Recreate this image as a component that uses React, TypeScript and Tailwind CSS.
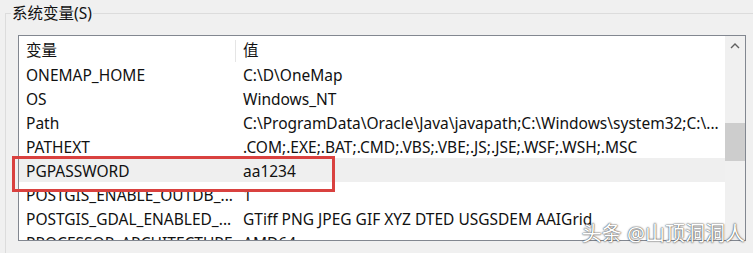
import React from 'react';

const rows: [string, string][] = [
  ['ONEMAP_HOME', 'C:\\D\\OneMap'],
  ['OS', 'Windows_NT'],
  ['Path', 'C:\\ProgramData\\Oracle\\Java\\javapath;C:\\Windows\\system32;C:\\...'],
  ['PATHEXT', '.COM;.EXE;.BAT;.CMD;.VBS;.VBE;.JS;.JSE;.WSF;.WSH;.MSC'],
  ['PGPASSWORD', 'aa1234'],
  ['POSTGIS_ENABLE_OUTDB_...', '1'],
  ['POSTGIS_GDAL_ENABLED_...', 'GTiff PNG JPEG GIF XYZ DTED USGSDEM AAIGrid'],
  ['PROCESSOR_ARCHITECTURE', 'AMD64'],
];

export default function App() {
  return (
    <div
      className="relative w-[753px] h-[253px] overflow-hidden bg-[#f0f0f0] text-[15.5px] text-[#111]"
      style={{ fontFamily: '"Noto Sans", "Noto Sans CJK SC", sans-serif' }}
    >
      {/* Group box */}
      <div className="relative mt-[13px] ml-[5px] h-[245px] border-l border-t border-[#dcdcdc]">
        <span className="absolute -top-[12px] left-[5px] bg-[#f0f0f0] px-[1px] leading-[22px]">
          系统变量(S)
        </span>

        {/* List view */}
        <div className="ml-[12px] mt-[21px] flex w-[728px] h-[206px] border border-[#828790] bg-white">
          <div className="flex-1 overflow-hidden">
            {/* Header */}
            <div className="flex h-[26px] items-center pt-[4px]">
              <div className="w-[217px] h-full pl-[7px] flex items-center border-r border-[#e5e5e5]">变量</div>
              <div className="pl-[7px]">值</div>
            </div>
            {rows.map(([name, value]) => (
              <div
                key={name}
                className={`flex h-[24px] items-center pt-[4px] whitespace-nowrap ${name === 'PGPASSWORD' ? 'bg-[#efefef]' : ''}`}
              >
                <div className="w-[217px] pl-[7px] overflow-hidden">{name}</div>
                <div className="pl-[7px]">{value}</div>
              </div>
            ))}
          </div>

          {/* Scrollbar */}
          <div className="w-[20px] flex flex-col bg-[#f0f0f0]">
            <div className="h-[20px] flex items-center justify-center">
              <svg width="10" height="6" viewBox="0 0 10 6" fill="none">
                <path d="M1 5 L5 1 L9 5" stroke="#606060" strokeWidth="1.4" />
              </svg>
            </div>
            <div className="h-[67px]" />
            <div className="h-[38px] bg-[#cdcdcd]" />
          </div>
        </div>
      </div>

      {/* Highlight frame */}
      <div className="absolute left-[12px] top-[156px] w-[323px] h-[36px] border-[3px] border-[#d9413f]" />

      {/* Watermark */}
      <div className="absolute right-[8px] bottom-[4px] text-[20px] text-white [text-shadow:0_0_1px_#444,0_0_2px_#444]">
        头条 @山顶洞洞人
      </div>
    </div>
  );
}
